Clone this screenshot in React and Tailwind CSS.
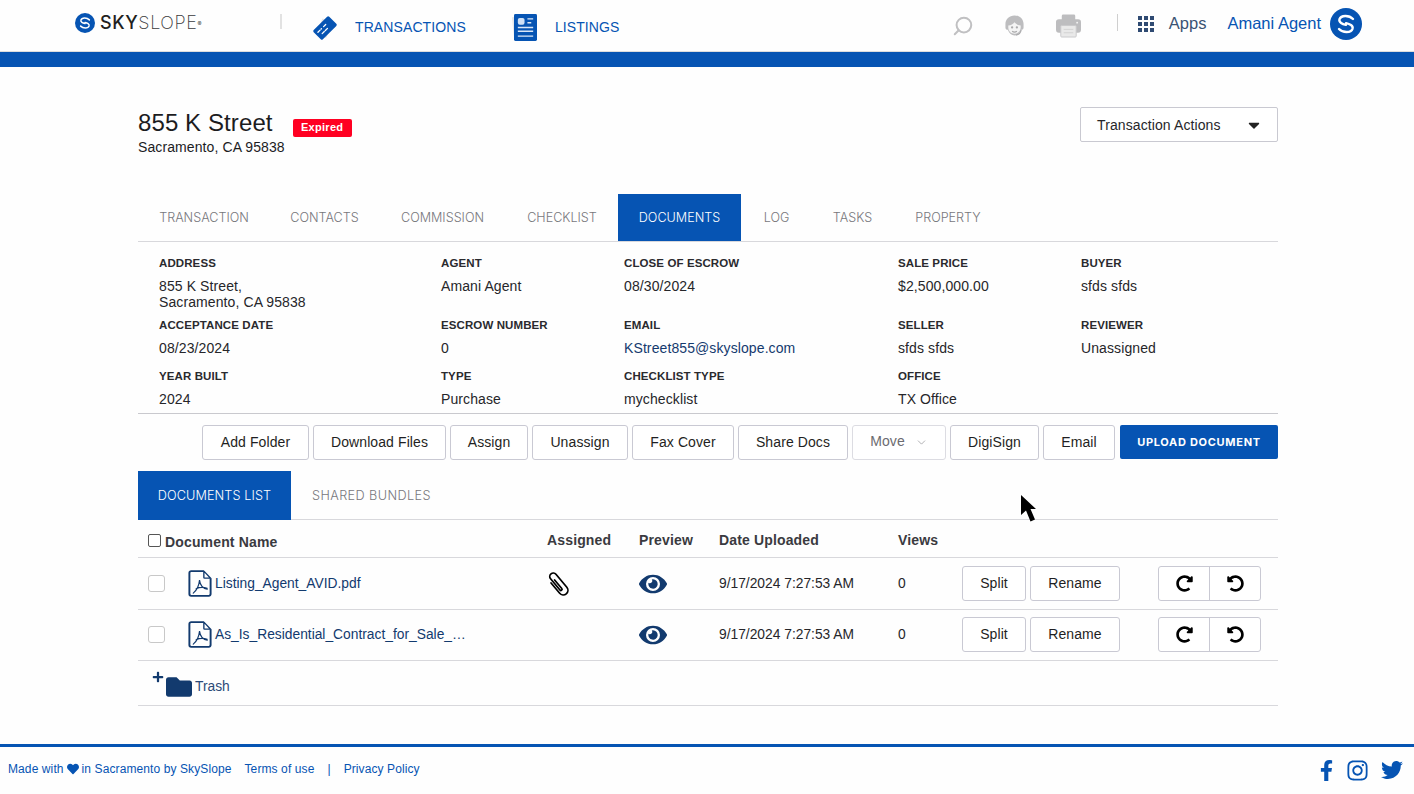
import React from "react";
import { Search, ChevronDown } from "lucide-react";
import {
  FaCaretDown,
  FaEye,
  FaFacebookF,
  FaFolder,
  FaHeart,
  FaInstagram,
  FaPlus,
  FaRedoAlt,
  FaTwitter,
  FaUndoAlt,
} from "react-icons/fa";

const SANS = "font-['Liberation_Sans',Arial,sans-serif]";

function LogoMark({ className }) {
  return (
    <svg viewBox="0 0 32 32" className={className}>
      <circle cx="16" cy="16" r="16" fill="#0654b3" />
      <g fill="none" stroke="#fff" strokeLinecap="round">
        <path d="M23 11C19 6.800 11 7 9.500 11.200c-1 3.300 3 4.800 6.500 5.600" strokeWidth="2.400" />
        <path d="M9 21c4 4.200 12 4 13.500-.2 1-3.300-3-4.800-6.500-5.600" strokeWidth="2.400" />
      </g>
    </svg>
  );
}

function TransactionIcon() {
  return (
    <svg viewBox="0 0 24 24" className="h-[24px] w-[24px] overflow-visible">
      <rect x="3" y="6" width="17" height="11" rx="1" fill="#e6e6e6" transform="rotate(-68 12 12)" />
      <g transform="rotate(-45 12 12)">
        <rect x="1" y="5.500" width="22" height="13" rx="1.500" fill="#0654b3" />
        <path d="M4 10h5M12 10h3M6 14h8" stroke="#fff" strokeWidth="1.300" strokeLinecap="round" strokeDasharray="3 1.500" />
      </g>
    </svg>
  );
}

function ListingIcon() {
  return (
    <svg viewBox="0 0 24 28" className="h-[27px] w-[23px] overflow-visible">
      <rect x="-1" y="2" width="20" height="25" fill="#e8e8e8" transform="rotate(-6 10 14)" />
      <rect width="24" height="28" rx="1.500" fill="#0654b3" />
      <rect x="4" y="4" width="7" height="7" rx="2" fill="#cfe0f5" />
      <path d="M14 5h6M14 9h4M4 14h16M4 18h16M4 23h16" stroke="#dbe7f7" strokeWidth="1.500" />
    </svg>
  );
}

function AgentIcon() {
  return (
    <svg viewBox="0 0 22 24" className="h-[24px] w-[21px]">
      <path d="M11 1C5.500 1 1.500 5 1.500 10v3.500c0 1.500 1 2.500 2.500 2.500C5.500 20 8 22 11 22s5.500-2 7-6c1.500 0 2.500-1 2.500-2.500V10C20.500 5 16.500 1 11 1Z" fill="#bdbdbf" />
      <path d="M4.500 11.500c3-.5 5-1.500 6.500-3.500 1.500 2 3.500 3 6.500 3.500v2c0 3.800-2.800 6.500-6.500 6.500s-6.500-2.700-6.500-6.500Z" fill="#f4f4f4" />
      <circle cx="8.500" cy="13.500" r="1.200" fill="#a9a9ab" />
      <circle cx="13.500" cy="13.500" r="1.200" fill="#a9a9ab" />
      <path d="M18 16c-.5 3-2.500 5-5.500 5.500M8.500 17.500c1.500 1 3.500 1 5 0" fill="none" stroke="#a9a9ab" strokeWidth="1.200" />
    </svg>
  );
}

function PrinterIcon() {
  return (
    <svg viewBox="0 0 26 24" className="h-[24px] w-[25px]">
      <path d="M6 6V1.500A1.500 1.500 0 0 1 7.500 0h11A1.500 1.500 0 0 1 20 1.500V6Z" fill="#bdbdbf" />
      <rect y="5" width="26" height="14" rx="3" fill="#bdbdbf" />
      <rect x="5" y="11.500" width="16" height="12" rx="1" fill="#e9e9e9" stroke="#c9c9cb" />
      <path d="M8 15.500h10M8 19h10" stroke="#d2d2d2" />
      <circle cx="22" cy="8.500" r="1" fill="#f2f2f2" />
    </svg>
  );
}

function PdfIcon() {
  return (
    <svg viewBox="0 0 24 28" fill="none" className="h-[27px] w-[24px] shrink-0">
      <path d="M16 1.200H2.800A1.800 1.800 0 0 0 1 3v22a1.800 1.800 0 0 0 1.800 1.800h18.400A1.800 1.800 0 0 0 23 25V8.500" stroke="#123a6e" strokeWidth="2" />
      <path d="M16 1.200v6.500a.8.800 0 0 0 .8.800H23Z" stroke="#123a6e" strokeWidth="1.400" strokeLinejoin="round" />
      <path d="M5 24c3-2.500 6-8 6.500-13.500C12 15 15 19 19.500 20M8 19.500c3-1.500 7-2 11.500-.5" stroke="#123a6e" strokeWidth="1.200" strokeLinecap="round" />
    </svg>
  );
}

function ClipIcon() {
  return (
    <svg viewBox="0 0 24 24" fill="none" className="ml-[-3px] h-[28px] w-[28px]">
      <path
        d="M8 7.500V19a4 4 0 0 0 8 0V4.500a3 3 0 0 0-6 0V17a1 1 0 0 0 2 0V7.500"
        stroke="#000"
        strokeWidth="1.500"
        strokeLinecap="round"
        transform="rotate(-40 12 12)"
      />
    </svg>
  );
}

function AppsIcon() {
  const dots = [0, 1, 2, 3, 4, 5, 6, 7, 8];
  return (
    <div className="grid grid-cols-3 gap-[2px]">
      {dots.map((d) => (
        <span key={d} className="h-[4px] w-[4px] bg-[#2f4a72]" />
      ))}
    </div>
  );
}

function TopBar() {
  return (
    <header className="flex h-[52px] items-center border-b border-[#dddddd] bg-[#fefefe]">
      <div className="ml-[75px] flex w-[205px] items-center gap-[5px] pb-[6px]">
        <LogoMark className="h-[20px] w-[20px]" />
        <span className="font-['Inter',sans-serif] text-[18px] leading-none tracking-[0.6px] text-[#3a3a3c]">
          <span className="font-medium text-[#1f1f21]">SKY</span>
          <span className="font-extralight">SLOPE</span>
          <sup className="text-[6px]">®</sup>
        </span>
      </div>
      <span className="mb-[8px] h-[15px] w-[2px] bg-[#e2e2e2]" />
      <nav className={`ml-[31px] mt-[4px] flex items-center text-[14px] text-[#0654b3] ${SANS}`}>
        <TransactionIcon />
        <span className="ml-[18px]">TRANSACTIONS</span>
        <span className="ml-[48px]">
          <ListingIcon />
        </span>
        <span className="ml-[18px]">LISTINGS</span>
      </nav>
      <div className="ml-auto flex items-center pr-[52px] tracking-normal">
        <Search size={22} strokeWidth={2.200} className="-scale-x-100 text-[#c0c0c2]" />
        <span className="ml-[30px]">
          <AgentIcon />
        </span>
        <span className="ml-[31px]">
          <PrinterIcon />
        </span>
        <span className="ml-[36px] mb-[6px] h-[17px] w-px bg-[#cfcfcf]" />
        <span className="mb-[4px] ml-[20px]">
          <AppsIcon />
        </span>
        <span className={`mb-[4px] ml-[15px] text-[16.500px] text-[#3a5273] ${SANS}`}>Apps</span>
        <span className={`mb-[4px] ml-[21px] text-[16.500px] text-[#0654b3] ${SANS}`}>Amani Agent</span>
        <LogoMark className="mb-[4px] ml-[9px] h-[32px] w-[32px]" />
      </div>
    </header>
  );
}

function TitleRow() {
  return (
    <div className="flex h-[127px] items-start justify-between pt-[40px]">
      <div className="text-[#1c1c1e]">
        <div className="flex items-center">
          <h1 className="text-[24px] leading-[32px]">855 K Street</h1>
          <span className="ml-[20px] mt-[9px] flex h-[18px] w-[59px] items-center justify-center rounded-[2px] bg-[#ff0022] text-[11px] font-bold tracking-[0.3px] text-white">
            Expired
          </span>
        </div>
        <p className="text-[14px] leading-[16px]">Sacramento, CA 95838</p>
      </div>
      <button className="flex h-[35px] w-[198px] items-center justify-between rounded-[2px] border border-[#c9c9d1] bg-white pl-[16px] pr-[14px] pt-[1px] text-[14px] text-[#26262a]">
        Transaction Actions
        <FaCaretDown size={18} className="text-[#222]" />
      </button>
    </div>
  );
}

const TABS = [
  { label: "TRANSACTION", width: "w-[132px]" },
  { label: "CONTACTS", width: "w-[109px]" },
  { label: "COMMISSION", width: "w-[127px]" },
  { label: "CHECKLIST", width: "w-[112px]" },
  { label: "DOCUMENTS", width: "w-[123px]", active: true },
  { label: "LOG", width: "w-[71px]" },
  { label: "TASKS", width: "w-[81px]" },
  { label: "PROPERTY", width: "w-[110px]" },
];

function MainTabs() {
  return (
    <div className="flex h-[48px] border-b border-[#d8d8dc] font-['Inter',sans-serif] text-[12.600px] font-light tracking-normal">
      {TABS.map((tab) => (
        <span
          key={tab.label}
          className={`flex h-[47px] items-center justify-center pt-[1px] ${tab.width} ${tab.active ? "bg-[#0654b3] text-white" : "text-[#77777c]"}`}
        >
          {tab.label}
        </span>
      ))}
    </div>
  );
}

function Field({ label, children }) {
  return (
    <div>
      <div className="text-[11.500px] font-bold leading-[14px] text-[#2a2a2e]">{label}</div>
      <div className="mt-[8px] text-[14px] leading-[16px] text-[#26262a]">{children}</div>
    </div>
  );
}

function TransactionInfo() {
  return (
    <div className="grid h-[172px] grid-cols-[282px_183px_274px_183px_1fr] grid-rows-[62px_51px_auto] border-b border-[#c9c9ce] pl-[21px] pt-[14px]">
      <Field label="ADDRESS">
        855 K Street,
        <br />
        Sacramento, CA 95838
      </Field>
      <Field label="AGENT">Amani Agent</Field>
      <Field label="CLOSE OF ESCROW">08/30/2024</Field>
      <Field label="SALE PRICE">$2,500,000.00</Field>
      <Field label="BUYER">sfds sfds</Field>
      <Field label="ACCEPTANCE DATE">08/23/2024</Field>
      <Field label="ESCROW NUMBER">0</Field>
      <Field label="EMAIL">
        <a className="text-[#153a6e]">KStreet855@skyslope.com</a>
      </Field>
      <Field label="SELLER">sfds sfds</Field>
      <Field label="REVIEWER">Unassigned</Field>
      <Field label="YEAR BUILT">2024</Field>
      <Field label="TYPE">Purchase</Field>
      <Field label="CHECKLIST TYPE">mychecklist</Field>
      <Field label="OFFICE">TX Office</Field>
    </div>
  );
}

function ActionButton({ children, width }) {
  return (
    <button className={`flex h-[35px] items-center justify-center rounded-[3px] border border-[#c9c9d3] bg-white text-[14px] text-[#1f1f23] ${width}`}>
      {children}
    </button>
  );
}

function Toolbar() {
  return (
    <div className="flex h-[57px] items-start justify-end gap-[4px] pt-[11px]">
      <ActionButton width="w-[107px]">Add Folder</ActionButton>
      <ActionButton width="w-[133px]">Download Files</ActionButton>
      <ActionButton width="w-[78px]">Assign</ActionButton>
      <ActionButton width="w-[96px]">Unassign</ActionButton>
      <ActionButton width="w-[102px]">Fax Cover</ActionButton>
      <ActionButton width="w-[110px]">Share Docs</ActionButton>
      <button className="flex h-[35px] w-[94px] items-center justify-center gap-[10px] rounded-[3px] border border-[#dcdce2] bg-white pb-[2px] text-[14px] text-[#6b6b70]">
        Move
        <ChevronDown size={13} strokeWidth={1.200} className="mt-[2px] text-[#88888c]" />
      </button>
      <ActionButton width="w-[89px]">DigiSign</ActionButton>
      <ActionButton width="w-[72px]">Email</ActionButton>
      <button className="ml-[1px] flex h-[34px] w-[158px] items-center justify-center rounded-[2px] bg-[#0654b3] font-['Inter',sans-serif] text-[11px] font-bold tracking-[0.7px] text-white">
        UPLOAD DOCUMENT
      </button>
    </div>
  );
}

function SubTabs() {
  return (
    <div className="flex h-[49px] border-b border-[#d8d8dc] font-['Inter',sans-serif] text-[12.700px] font-light">
      <span className="-mb-px flex w-[153px] items-center justify-center bg-[#0654b3] pt-[1px] text-white">DOCUMENTS LIST</span>
      <span className="flex items-center pl-[21px] pt-[1px] tracking-[0.4px] text-[#77777c]">SHARED BUNDLES</span>
    </div>
  );
}

const ROW_GRID = "grid grid-cols-[409px_92px_80px_179px_64px_196px_1fr] items-center border-b border-[#d8d8dc]";

function DocRow({ name, assigned, height }) {
  return (
    <div className={`${ROW_GRID} ${height}`}>
      <div className="flex items-center">
        <span className="ml-[10px] h-[17px] w-[17px] rounded-[3px] border border-[#c8c8c8] bg-white" />
        <span className="ml-[23px]">
          <PdfIcon />
        </span>
        <a className="ml-[3px] pt-[2px] text-[13.800px] tracking-normal text-[#123a6e]">{name}</a>
      </div>
      <div>{assigned && <ClipIcon />}</div>
      <FaEye size={28} className="text-[#123a6e]" />
      <div className="pt-[1px] text-[13.800px] tracking-normal text-[#26262a]">9/17/2024 7:27:53 AM</div>
      <div className="pt-[1px] text-[13.800px] tracking-normal text-[#26262a]">0</div>
      <div className="flex gap-[4px]">
        <ActionButton width="w-[64px]">Split</ActionButton>
        <ActionButton width="w-[90px]">Rename</ActionButton>
      </div>
      <div className="flex h-[35px] w-[103px] rounded-[3px] border border-[#c9c9d3] bg-white">
        <span className="flex flex-1 items-center justify-center border-r border-[#c9c9d3]">
          <FaRedoAlt size={17} className="text-black" />
        </span>
        <span className="flex flex-1 items-center justify-center">
          <FaUndoAlt size={17} className="text-black" />
        </span>
      </div>
    </div>
  );
}

function DocumentsTable() {
  return (
    <div>
      <div className={`${ROW_GRID} h-[38px] pt-[4px] text-[14px] font-bold tracking-[0.15px] text-[#3a3a40]`}>
        <div className="flex items-center pt-[4px]">
          <span className="ml-[10px] h-[13px] w-[13px] translate-y-[-2px] rounded-[2px] border border-[#555] bg-white" />
          <span className="ml-[4px]">Document Name</span>
        </div>
        <div>Assigned</div>
        <div>Preview</div>
        <div>Date Uploaded</div>
        <div>Views</div>
      </div>
      <DocRow name="Listing_Agent_AVID.pdf" assigned height="h-[52px]" />
      <DocRow name="As_Is_Residential_Contract_for_Sale_…" height="h-[51px] pb-[1px]" />
      <div className="flex h-[45px] items-center border-b border-[#d8d8dc] pl-[14px] pt-[7px]">
        <FaPlus size={12} className="mb-[20px] text-[#123a6e]" />
        <FaFolder size={26} className="ml-[2px] text-[#123a6e]" />
        <a className="ml-[3px] pt-[2px] text-[13.800px] tracking-normal text-[#2b4a78]">Trash</a>
      </div>
    </div>
  );
}

function Footer() {
  return (
    <footer className="mt-[38px] flex h-[50px] items-center justify-between border-t-[3px] border-[#0654b3] pl-[8px] pr-[11px] text-[12px] text-[#0654b3]">
      <div className="flex items-center pb-[3px]">
        <span>Made with</span>
        <FaHeart size={12} className="mx-[3px]" />
        <span>in Sacramento by SkySlope</span>
        <span className="ml-[13px]">Terms of use</span>
        <span className="ml-[13px]">|</span>
        <span className="ml-[13px]">Privacy Policy</span>
      </div>
      <div className="flex items-center gap-[12px] pb-[1px]">
        <FaFacebookF size={21} className="-mr-[3px]" />
        <FaInstagram size={23} />
        <FaTwitter size={22} />
      </div>
    </footer>
  );
}

export default function App() {
  return (
    <div className={`relative min-h-screen overflow-hidden bg-[#fefefe] tracking-[0.1px] ${SANS}`}>
      <TopBar />
      <div className="h-[15px] bg-[#0654b3]" />
      <main className="ml-[138px] w-[1140px]">
        <TitleRow />
        <MainTabs />
        <TransactionInfo />
        <Toolbar />
        <SubTabs />
        <DocumentsTable />
      </main>
      <Footer />
      {/* recorded mouse pointer */}
      <svg viewBox="0 0 15 27" className="absolute left-[1021px] top-[495px] h-[27px] w-[15px]">
        <path d="M0 0v20l5-4.500 4.500 11 4.500-2-4.500-10.500H15Z" fill="#000" />
      </svg>
    </div>
  );
}
